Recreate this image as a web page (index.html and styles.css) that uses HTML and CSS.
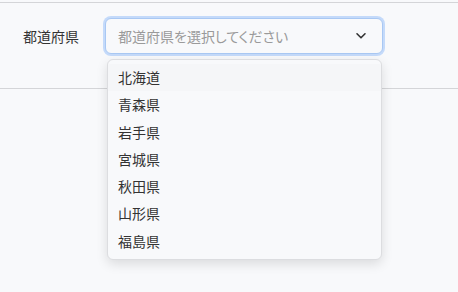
FILE: index.html
```html
<!DOCTYPE html>
<html lang="ja">
<head>
    <meta charset="UTF-8">
    <meta name="viewport" content="width=device-width, initial-scale=1.0">
    <title>都道府県</title>
    <link rel="stylesheet" href="styles.css">
</head>
<body>
    <div class="form-row">
        <label class="field-label">都道府県</label>
        <div class="select-wrap">
            <div class="select-box">
                <span class="placeholder">都道府県を選択してください</span>
                <svg class="chevron" width="12" height="8" viewBox="0 0 12 8">
                    <path d="M2 1.8 L6 5.8 L10 1.8" fill="none" stroke="#333" stroke-width="1.6" stroke-linecap="round" stroke-linejoin="round"/>
                </svg>
            </div>
            <ul class="menu">
                <li class="menu-item active">北海道</li>
                <li class="menu-item">青森県</li>
                <li class="menu-item">岩手県</li>
                <li class="menu-item">宮城県</li>
                <li class="menu-item">秋田県</li>
                <li class="menu-item">山形県</li>
                <li class="menu-item">福島県</li>
            </ul>
        </div>
    </div>
</body>
</html>
```

FILE: styles.css
```css
* {
    font-family: "Noto Sans CJK JP", "Noto Sans", sans-serif;
    box-sizing: border-box;
    margin: 0;
    padding: 0;
}

body {
    background-color: #f8f9fb;
    border-top: 1px solid #d4d5d8;
    margin-top: 2px;
    height: 290px;
}

.form-row {
    display: flex;
    align-items: flex-start;
    padding: 15px 0 0 23px;
    height: 86px;
    border-bottom: 1px solid #d4d5d8;
}

.field-label {
    font-size: 14px;
    color: #333;
    line-height: 36px;
    width: 82px;
}

.select-wrap {
    position: relative;
    width: 278px;
}

.select-box {
    display: flex;
    align-items: center;
    justify-content: space-between;
    height: 36px;
    padding: 0 15px 0 12px;
    border: 1px solid #a9c8f3;
    border-radius: 6px;
    box-shadow: 0 0 0 2px #c4dafa;
    background-color: #f8f9fb;
}

.placeholder {
    font-size: 14px;
    color: #9a9a9a;
    font-feature-settings: "palt";
}

.chevron {
    display: block;
}

.menu {
    position: absolute;
    top: 41px;
    left: 2px;
    width: 275px;
    list-style: none;
    padding: 4px 0;
    background-color: #f8f9fb;
    border: 1px solid #dcdde0;
    border-radius: 6px;
    box-shadow: 0 4px 12px rgba(0, 0, 0, 0.12);
}

.menu-item {
    font-size: 14px;
    color: #333;
    height: 27.3px;
    line-height: 27.3px;
    padding-left: 10px;
}

.menu-item.active {
    background-color: #f5f6f8;
}
```
